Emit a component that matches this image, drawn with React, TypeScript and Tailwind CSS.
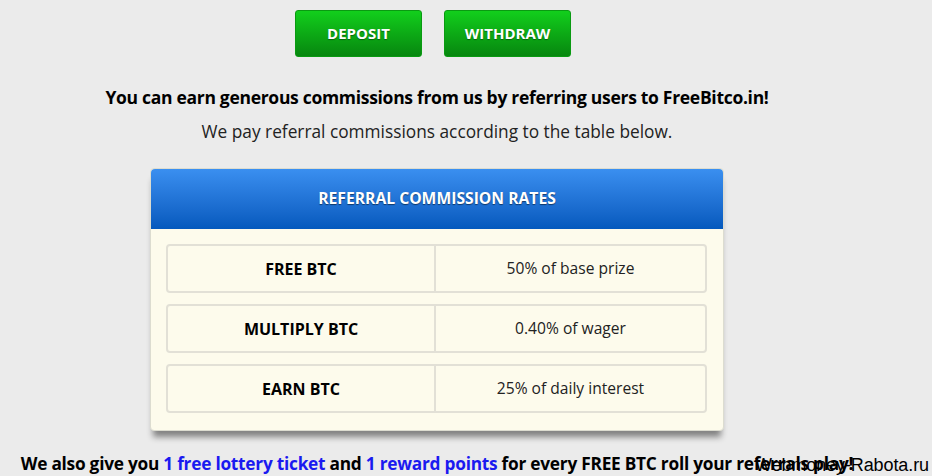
import * as React from "react";

const rates = [
    { name: "FREE BTC", value: "50% of base prize" },
    { name: "MULTIPLY BTC", value: "0.40% of wager" },
    { name: "EARN BTC", value: "25% of daily interest" },
];

export default function App() {
    return (
        <div
            className="relative w-[932px] h-[476px] overflow-hidden bg-[#ebebeb] text-black"
            style={{ fontFamily: '"Open Sans", "Liberation Sans", sans-serif' }}
        >
            <div className="w-[874px] flex flex-col items-center">
                {/* Buttons */}
                <div className="flex gap-[22px] pt-[10px] mr-[8px]">
                    <button className="w-[127px] h-[47px] rounded-[3px] border border-[#0a9a12] bg-gradient-to-b from-[#12cf1c] to-[#07870f] text-white font-bold text-[15px] [text-shadow:0_1px_1px_rgba(0,0,0,0.4)]">
                        DEPOSIT
                    </button>
                    <button className="w-[127px] h-[47px] rounded-[3px] border border-[#0a9a12] bg-gradient-to-b from-[#12cf1c] to-[#07870f] text-white font-bold text-[15px] [text-shadow:0_1px_1px_rgba(0,0,0,0.4)]">
                        WITHDRAW
                    </button>
                </div>

                {/* Intro */}
                <p className="mt-[29px] text-[17.5px] font-bold tracking-[-0.3px] leading-[22px] whitespace-nowrap">
                    You can earn generous commissions from us by referring users to FreeBitco.in!
                </p>
                <p className="mt-[12px] text-[17.3px] leading-[24px] text-[#222] whitespace-nowrap">
                    We pay referral commissions according to the table below.
                </p>

                {/* Rates table */}
                <div className="mt-[24px] w-[574px] rounded-[4px] bg-[#fdfbec] border border-[#dcdcd0] shadow-[0_9px_6px_-3px_rgba(0,0,0,0.45)]">
                    <div className="h-[60px] flex items-center justify-center rounded-t-[4px] bg-gradient-to-b from-[#3a8ff0] to-[#0459bd] text-white font-bold text-[15.7px] [text-shadow:0_1px_1px_rgba(0,0,0,0.5)]">
                        REFERRAL COMMISSION RATES
                    </div>
                    <div className="flex flex-col gap-[11px] pt-[15px] pb-[17px] pl-[15px] pr-[16px]">
                        {rates.map((r) => (
                            <div
                                key={r.name}
                                className="h-[49px] flex rounded-[4px] border-2 border-[#e2e0d6]"
                            >
                                <div className="w-[268px] flex items-center justify-center border-r-2 border-[#e2e0d6] font-bold text-[16px]">
                                    {r.name}
                                </div>
                                <div className="flex-1 flex items-center justify-center text-[15.6px] text-[#222]">
                                    {r.value}
                                </div>
                            </div>
                        ))}
                    </div>
                </div>

                <p className="mt-[21px] text-[17.3px] font-bold tracking-[-0.25px] whitespace-nowrap leading-[24px]">
                    We also give you <span className="text-[#1a1af0]">1 free lottery ticket</span> and{" "}
                    <span className="text-[#1a1af0]">1 reward points</span> for every FREE BTC roll your referrals play!
                </p>
            </div>

            {/* Watermark */}
            <div
                className="absolute left-[755px] top-[454px] text-[18px] text-black leading-[22px] tracking-[-0.1px] whitespace-nowrap"
                style={{ fontFamily: '"Liberation Sans", Arial, sans-serif' }}
            >
                Webmoney-Rabota.ru
            </div>
        </div>
    );
}
